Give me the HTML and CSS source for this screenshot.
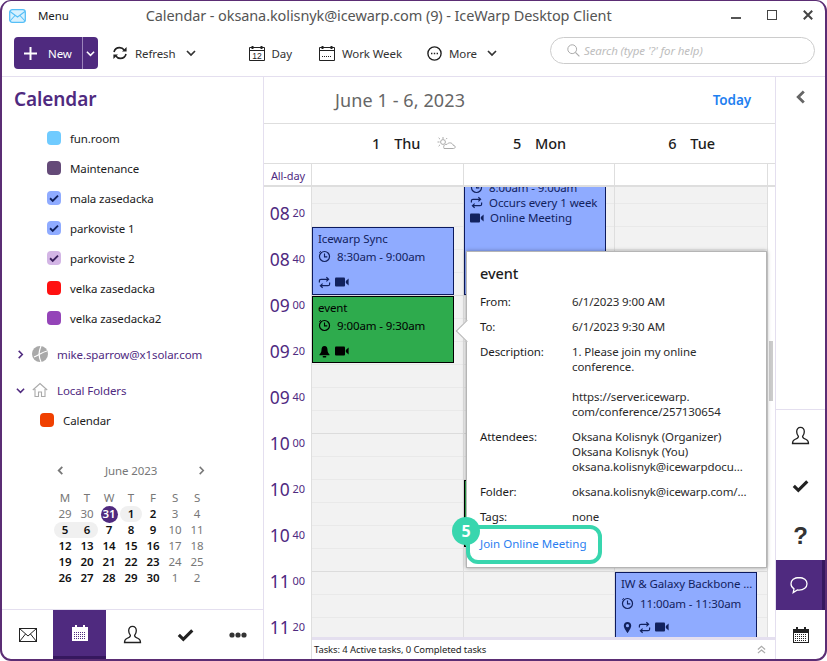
FILE: index.html
```html
<!DOCTYPE html>
<html lang="en">
<head>
    <meta charset="UTF-8">
    <meta name="viewport" content="width=device-width, initial-scale=1.0">
    <title>IceWarp Desktop Client</title>
    <link rel="stylesheet" href="styles.css">
</head>
<body>
    <svg class="icon-defs" width="0" height="0">
        <symbol id="i-clock" viewBox="0 0 14 14"><circle cx="7" cy="7" r="5.4" fill="none" stroke="currentColor" stroke-width="1.3"/><path d="M7 3.8V7.4H10" fill="none" stroke="currentColor" stroke-width="1.2"/><path d="M1.4 3 3 1.2" stroke="currentColor" stroke-width="1"/></symbol>
        <symbol id="i-repeat" viewBox="0 0 14 14"><path d="M1.5 7V5.2C1.5 4.2 2.2 3.6 3.2 3.6H11M9 1.4 11.4 3.6 9 5.8M12.5 7V8.8C12.5 9.8 11.8 10.4 10.8 10.4H3M5 8.2 2.6 10.4 5 12.6" fill="none" stroke="currentColor" stroke-width="1.3"/></symbol>
        <symbol id="i-video" viewBox="0 0 14 14"><rect x="0" y="2.5" width="10" height="9" rx="1" fill="currentColor"/><path d="M10.8 6 13.6 3.6V10.4L10.8 8Z" fill="currentColor"/></symbol>
        <symbol id="i-bell" viewBox="0 0 14 14"><path d="M7 1C4.8 1 3.8 2.8 3.8 4.8 3.8 7.6 2.8 9 1.6 10.2V11H12.4V10.2C11.2 9 10.2 7.6 10.2 4.8 10.2 2.8 9.2 1 7 1Z" fill="currentColor"/><rect x="5" y="11.8" width="4" height="1.6" rx=".8" fill="currentColor"/></symbol>
        <symbol id="i-pin" viewBox="0 0 14 14"><path d="M7 1C4.6 1 3 2.7 3 5 3 7.6 7 13 7 13S11 7.6 11 5C11 2.7 9.4 1 7 1Z" fill="currentColor"/><circle cx="7" cy="5" r="1.7" fill="#8fabff"/></symbol>
        <symbol id="i-check" viewBox="0 0 14 14"><path d="M1.5 7.4 5.2 11 12.6 3.6" fill="none" stroke="currentColor" stroke-width="2.6"/></symbol>
        <symbol id="i-chev-down" viewBox="0 0 10 10"><path d="M1 3 5 7 9 3" fill="none" stroke="currentColor" stroke-width="1.7"/></symbol>
        <symbol id="i-chev-right" viewBox="0 0 10 10"><path d="M3 1 7 5 3 9" fill="none" stroke="currentColor" stroke-width="1.7"/></symbol>
        <symbol id="i-chev-left" viewBox="0 0 10 10"><path d="M7 1 3 5 7 9" fill="none" stroke="currentColor" stroke-width="2"/></symbol>
        <symbol id="i-person" viewBox="0 0 20 20"><path d="M10 1.5C7.4 1.5 6 3.4 6 6 6 8.2 6.9 9.8 7.8 11 7.8 12.6 6.4 13.2 4 14.2 2.4 14.9 1.6 15.8 1.6 18.4H18.4C18.4 15.8 17.6 14.9 16 14.2 13.6 13.2 12.2 12.6 12.2 11 13.1 9.8 14 8.2 14 6 14 3.4 12.6 1.5 10 1.5Z" fill="none" stroke="currentColor" stroke-width="1.4"/></symbol>
        <symbol id="i-bigcal" viewBox="0 0 18 18"><path d="M1 3H4V1H6V3H12V1H14V3H17V17H1Z" fill="currentColor"/><rect x="2" y="7" width="14" height="9" fill="var(--cal-fill)"/><path d="M3 8.5H15M3 10.5H15M3 12.5H15M3 14.5H15" stroke="var(--cal-dots)" stroke-width="1" stroke-dasharray="1 1"/></symbol>
    </svg>

    <div class="window">
        <header class="titlebar">
            <svg class="app-icon" width="17" height="14" viewBox="0 0 17 14"><rect x=".7" y=".7" width="15.6" height="12.6" rx="2.5" fill="#d8f1fe" stroke="#56bff7" stroke-width="1.3"/><path d="M1 2.5 8.5 8 16 2.5M1 12 6 6.5M16 12 11 6.5" fill="none" stroke="#56bff7" stroke-width="1.1"/></svg>
            <span class="menu-label">Menu</span>
            <span class="window-title">Calendar - oksana.kolisnyk@icewarp.com (9) - IceWarp Desktop Client</span>
            <div class="window-controls">
                <svg width="10" height="10" viewBox="0 0 10 10"><rect y="7" width="10" height="2" fill="#555"/></svg>
                <svg width="10" height="10" viewBox="0 0 10 10"><rect x=".5" y=".5" width="9" height="9" fill="none" stroke="#444"/></svg>
                <svg width="10" height="10" viewBox="0 0 10 10"><path d="M.8.8 9.2 9.2M9.2.8.8 9.2" stroke="#444" stroke-width="2"/></svg>
            </div>
        </header>

        <div class="toolbar">
            <div class="new-btn">
                <span class="new-main">
                    <svg width="13" height="13" viewBox="0 0 13 13"><path d="M6.5 0V13M0 6.5H13" stroke="#fff" stroke-width="2"/></svg>
                    New
                </span>
                <span class="new-drop"><svg width="9" height="9"><use href="#i-chev-down"/></svg></span>
            </div>
            <a class="tool tool-refresh">
                <svg width="16" height="16" viewBox="0 0 16 16"><path d="M2 7C2.6 4.4 4.8 2.6 7.6 2.6 9.6 2.6 11.2 3.6 12.2 5M14 9C13.4 11.6 11.2 13.4 8.4 13.4 6.4 13.4 4.8 12.4 3.8 11" fill="none" stroke="#222" stroke-width="1.6"/><path d="M14.6 2V6.6H10ZM1.4 14V9.4H6Z" fill="#222"/></svg>
                Refresh
                <svg class="tool-chev" width="10" height="10"><use href="#i-chev-down"/></svg>
            </a>
            <a class="tool tool-day">
                <svg width="16" height="16" viewBox="0 0 16 16"><path d="M.5 2.5H15.5V15.5H.5ZM.5 5.5H15.5" fill="none" stroke="#222"/><path d="M3.5 1V4M12.5 1V4" stroke="#222" stroke-width="2"/><text x="8" y="14" font-size="8.5" text-anchor="middle" font-family="Liberation Sans" fill="#222">12</text></svg>
                Day
            </a>
            <a class="tool tool-week">
                <svg width="16" height="16" viewBox="0 0 16 16"><path d="M.5 2.5H15.5V15.5H.5ZM.5 5.5H15.5" fill="none" stroke="#222"/><path d="M3.5 1V4M12.5 1V4" stroke="#222" stroke-width="2"/><path d="M3 11.5H13" stroke="#222" stroke-dasharray="1 1"/></svg>
                Work Week
            </a>
            <a class="tool tool-more">
                <svg width="15" height="15" viewBox="0 0 15 15"><circle cx="7.5" cy="7.5" r="6.6" fill="none" stroke="#222" stroke-width="1.4"/><path d="M4 7.5H5.4M6.8 7.5H8.2M9.6 7.5H11" stroke="#222" stroke-width="1.6"/></svg>
                More
                <svg class="tool-chev" width="10" height="10"><use href="#i-chev-down"/></svg>
            </a>
            <div class="search-box">
                <svg width="13" height="13" viewBox="0 0 13 13"><circle cx="5.2" cy="5.2" r="4.4" fill="none" stroke="#aaa"/><path d="M8.4 8.4 12.4 12.4" stroke="#aaa" stroke-width="1.2"/></svg>
                <span>Search (type '?' for help)</span>
            </div>
        </div>

        <div class="app-body">
            <aside class="sidebar">
                <h1 class="sidebar-title">Calendar</h1>
                <ul class="folder-list">
                    <li><span class="swatch swatch-sky"></span>fun.room</li>
                    <li><span class="swatch swatch-plum"></span>Maintenance</li>
                    <li><span class="swatch swatch-blue"><svg width="10" height="10"><use href="#i-check"/></svg></span>mala zasedacka</li>
                    <li><span class="swatch swatch-blue"><svg width="10" height="10"><use href="#i-check"/></svg></span>parkoviste 1</li>
                    <li><span class="swatch swatch-lilac"><svg width="10" height="10"><use href="#i-check"/></svg></span>parkoviste 2</li>
                    <li><span class="swatch swatch-red"></span>velka zasedacka</li>
                    <li><span class="swatch swatch-violet"></span>velka zasedacka2</li>
                </ul>
                <div class="account account-mike">
                    <svg class="account-chev" width="9" height="9"><use href="#i-chev-right"/></svg>
                    <svg width="16" height="16" viewBox="0 0 16 16"><circle cx="8" cy="8" r="8" fill="#a9a9a9"/><path d="M9 0C7 5 6 9 9 16M2 11C6 10 10 6 15 5" fill="none" stroke="#fff" stroke-width="1.2"/></svg>
                    <span>mike.sparrow@x1solar.com</span>
                </div>
                <div class="account account-local">
                    <svg class="account-chev" width="9" height="9"><use href="#i-chev-down"/></svg>
                    <svg width="16" height="16" viewBox="0 0 16 16"><path d="M.8 8 8 1.5 15.2 8M3 7V14.5H6.5V10H9.5V14.5H13V7" fill="none" stroke="#aaa" stroke-width="1.1"/></svg>
                    <span>Local Folders</span>
                </div>
                <div class="local-item"><span class="swatch swatch-orange"></span>Calendar</div>

                <div class="minical">
                    <div class="minical-head">
                        <svg width="9" height="9"><use href="#i-chev-left"/></svg>
                        <span>June 2023</span>
                        <svg width="9" height="9"><use href="#i-chev-right"/></svg>
                    </div>
                    <div class="minical-grid">
                        <span class="dow">M</span><span class="dow">T</span><span class="dow">W</span><span class="dow">T</span><span class="dow">F</span><span class="dow">S</span><span class="dow">S</span>
                        <span>29</span><span>30</span><b class="today">31</b><b class="sel-one">1</b><b>2</b><span>3</span><span>4</span>
                        <b class="sel-start">5</b><b class="sel-end">6</b><b>7</b><b>8</b><b>9</b><span>10</span><span>11</span>
                        <b>12</b><b>13</b><b>14</b><b>15</b><b>16</b><span>17</span><span>18</span>
                        <b>19</b><b>20</b><b>21</b><b>22</b><b>23</b><span>24</span><span>25</span>
                        <b>26</b><b>27</b><b>28</b><b>29</b><b>30</b><span>1</span><span>2</span>
                    </div>
                </div>

                <nav class="module-nav">
                    <a><svg width="26" height="20" viewBox="0 0 26 20"><rect x="4.5" y="3.5" width="17" height="13" fill="none" stroke="#222"/><path d="M4.5 3.5 13 11 21.5 3.5M4.5 16.5 10.5 9M21.5 16.5 15.5 9" fill="none" stroke="#222"/></svg></a>
                    <a class="active"><svg width="18" height="18"><use href="#i-bigcal"/></svg></a>
                    <a><svg width="19" height="19"><use href="#i-person"/></svg></a>
                    <a><svg width="17" height="17"><use href="#i-check"/></svg></a>
                    <a><svg width="18" height="6" viewBox="0 0 18 6"><circle cx="3" cy="3" r="2.6" fill="#333"/><circle cx="9" cy="3" r="2.6" fill="#333"/><circle cx="15" cy="3" r="2.6" fill="#333"/></svg></a>
                </nav>
            </aside>

            <main class="calendar">
                <div class="range-bar">
                    <span class="range-label">June 1 - 6, 2023</span>
                    <a class="today-link">Today</a>
                </div>
                <div class="day-head">
                    <div class="day-cell day-thu">
                        <span class="day-num">1</span><span>Thu</span>
                        <svg class="weather" width="19" height="15" viewBox="0 0 19 15"><path d="M7 12.5H16.5C19 12.5 18.5 9 16 9.2 15.5 6.5 11.5 6 10 8.4 7.5 8 6 10 7 12.5Z" fill="none" stroke="#aaa"/><path d="M6 3V1M2.5 6H.5M3 3.2 1.6 1.8M9 3.2 10.2 2M3 8.8 1.6 10.2" stroke="#aaa"/><circle cx="6" cy="6" r="2.4" fill="none" stroke="#aaa"/></svg>
                    </div>
                    <div class="day-cell day-mon"><span class="day-num">5</span><span>Mon</span></div>
                    <div class="day-cell day-tue"><span class="day-num">6</span><span>Tue</span></div>
                </div>

                <div class="cal-body">
                    <div class="time-col">
                        <div class="allday-label">All-day</div>
                        <div class="time-labels">
                            <div class="time-row">08<small>20</small></div>
                            <div class="time-row">08<small>40</small></div>
                            <div class="time-row">09<small>00</small></div>
                            <div class="time-row">09<small>20</small></div>
                            <div class="time-row">09<small>40</small></div>
                            <div class="time-row">10<small>00</small></div>
                            <div class="time-row">10<small>20</small></div>
                            <div class="time-row">10<small>40</small></div>
                            <div class="time-row">11<small>00</small></div>
                            <div class="time-row">11<small>20</small></div>
                        </div>
                    </div>

                    <div class="cal-main">
                        <div class="allday-row">
                            <div class="col-thu"></div>
                            <div class="col-mon"></div>
                            <div class="col-tue"></div>
                        </div>
                        <div class="grid">
                            <div class="day-col col-thu">
                                <div class="event event-blue event-sync">
                                    <div class="ev-title">Icewarp Sync</div>
                                    <div class="ev-line"><svg width="13" height="13"><use href="#i-clock"/></svg>8:30am - 9:00am</div>
                                    <div class="ev-icons"><svg width="13" height="13"><use href="#i-repeat"/></svg><svg width="14" height="14"><use href="#i-video"/></svg></div>
                                </div>
                                <div class="event event-green event-nine">
                                    <div class="ev-title">event</div>
                                    <div class="ev-line"><svg width="13" height="13"><use href="#i-clock"/></svg>9:00am - 9:30am</div>
                                    <div class="ev-icons"><svg width="13" height="13"><use href="#i-bell"/></svg><svg width="14" height="14"><use href="#i-video"/></svg></div>
                                </div>
                            </div>
                            <div class="day-col col-mon">
                                <div class="event event-blue event-weekly">
                                    <div class="ev-row"><svg width="13" height="13"><use href="#i-clock"/></svg>8:00am - 9:00am</div>
                                    <div class="ev-row"><svg width="13" height="13"><use href="#i-repeat"/></svg>Occurs every 1 week</div>
                                    <div class="ev-row"><svg width="14" height="14"><use href="#i-video"/></svg>Online Meeting</div>
                                </div>
                                <div class="event event-hidden"></div>
                            </div>
                            <div class="day-col col-tue">
                                <div class="event event-blue event-backbone">
                                    <div class="ev-title">IW &amp; Galaxy Backbone ...</div>
                                    <div class="ev-line"><svg width="13" height="13"><use href="#i-clock"/></svg>11:00am - 11:30am</div>
                                    <div class="ev-icons"><svg width="13" height="13"><use href="#i-pin"/></svg><svg width="13" height="13"><use href="#i-repeat"/></svg><svg width="14" height="14"><use href="#i-video"/></svg></div>
                                </div>
                            </div>
                            <div class="scroll-track"><div class="scroll-thumb"></div></div>

                            <div class="popup">
                                <h3 class="popup-title">event</h3>
                                <dl class="popup-fields">
                                    <dt>From:</dt><dd>6/1/2023 9:00 AM</dd>
                                    <dt>To:</dt><dd>6/1/2023 9:30 AM</dd>
                                    <dt>Description:</dt><dd>1. Please join my online<br>conference.<br><br>https://server.icewarp.<br>com/conference/257130654</dd>
                                    <dt>Attendees:</dt><dd>Oksana Kolisnyk (Organizer)<br>Oksana Kolisnyk (You)<br>oksana.kolisnyk@icewarpdocu...</dd>
                                    <dt>Folder:</dt><dd>oksana.kolisnyk@icewarp.com/...</dd>
                                    <dt>Tags:</dt><dd>none</dd>
                                </dl>
                                <a class="popup-join">Join Online Meeting</a>
                                <div class="callout-ring"></div>
                                <div class="callout-badge">5</div>
                            </div>
                        </div>
                        <div class="status-bar">
                            <span>Tasks: 4 Active tasks, 0 Completed tasks</span>
                            <svg width="9" height="9" viewBox="0 0 10 10"><path d="M1 5 5 1.5 9 5M1 9 5 5.5 9 9" fill="none" stroke="#aaa" stroke-width="1.3"/></svg>
                        </div>
                    </div>
                </div>
            </main>

            <aside class="rail">
                <div class="rail-top"><svg width="14" height="14"><use href="#i-chev-left"/></svg></div>
                <a><svg width="19" height="19"><use href="#i-person"/></svg></a>
                <a><svg width="17" height="17"><use href="#i-check"/></svg></a>
                <a class="rail-help">?</a>
                <a class="active"><svg width="20" height="20" viewBox="0 0 20 20"><path d="M10 2.5C5.2 2.5 2 5.2 2 8.8 2 11 3.2 12.8 5 13.9L4.2 17.6 8.4 15C8.9 15.1 9.5 15.1 10 15.1 14.8 15.1 18 12.4 18 8.8 18 5.2 14.8 2.5 10 2.5Z" fill="none" stroke="#fff" stroke-width="1.3"/></svg></a>
                <a><svg width="18" height="18"><use href="#i-bigcal"/></svg></a>
            </aside>
        </div>
    </div>
</body>
</html>
```

FILE: styles.css
```css
:root {
    --purple: #4f2a7f;
    --purple-dark: #36185e;
    --frame: #5b2d74;
    --line: #dedede;
    --soft-line: #e4dfef;
    --text: #1c1c1c;
    --event-blue: #8fabff;
    --event-navy: #0c1a5e;
    --event-green: #2eab4d;
    --teal: #38d6ae;
    --cal-fill: #fff;
    --cal-dots: #222;
}

* {
    margin: 0;
    padding: 0;
    box-sizing: border-box;
}

body {
    font-family: 'Noto Sans', 'Open Sans', sans-serif;
    font-size: 11.5px;
    letter-spacing: -0.1px;
    line-height: 15px;
    color: var(--text);
    background-color: #fff;
    width: 827px;
    height: 661px;
    overflow: hidden;
}

.icon-defs {
    position: absolute;
}

svg {
    display: block;
    flex-shrink: 0;
}

.window {
    width: 827px;
    height: 661px;
    border: 2px solid var(--frame);
    border-top-width: 1px;
    border-radius: 11px;
    display: flex;
    flex-direction: column;
    overflow: hidden;
    background-color: #fff;
}

/* title bar */
.titlebar {
    height: 31px;
    display: flex;
    align-items: center;
    padding: 0 0 2px 7px;
    flex-shrink: 0;
}

.menu-label {
    margin-left: 12px;
}

.window-title {
    margin-left: 77px;
    font-size: 14.5px;
    color: #555;
    white-space: nowrap;
}

.window-controls {
    margin-left: auto;
    display: flex;
    gap: 26px;
    padding-right: 12px;
    margin-bottom: 2px;
}

/* toolbar */
.toolbar {
    height: 45px;
    display: flex;
    align-items: center;
    padding: 0 0 2px 12px;
    border-bottom: 1px solid var(--soft-line);
    flex-shrink: 0;
}

.new-btn {
    width: 84px;
    height: 32px;
    background-color: var(--purple);
    border-radius: 4px;
    color: #fff;
    display: flex;
}

.new-main {
    width: 69px;
    display: flex;
    align-items: center;
    gap: 11px;
    padding-left: 10px;
    border-right: 1px solid #9c84bb;
}

.new-drop {
    flex-grow: 1;
    display: flex;
    align-items: center;
    justify-content: center;
}

.tool {
    display: flex;
    align-items: center;
    gap: 7px;
    white-space: nowrap;
    color: #333;
}

.tool-chev {
    margin-left: 3px;
}

.tool-refresh { margin-left: 14px; }
.tool-day { margin-left: 53px; }
.tool-week { margin-left: 27px; }
.tool-more { margin-left: 25px; }

.search-box {
    margin-left: auto;
    margin-right: 10px;
    width: 265px;
    height: 27px;
    margin-top: -6px;
    border: 1px solid #ccc;
    border-radius: 14px;
    display: flex;
    align-items: center;
    gap: 4px;
    padding-left: 16px;
    color: #bdbdbd;
    font-style: italic;
}

.app-body {
    flex-grow: 1;
    display: flex;
    min-height: 0;
}

/* left sidebar */
.sidebar {
    width: 262px;
    border-right: 1px solid var(--soft-line);
    display: flex;
    flex-direction: column;
    flex-shrink: 0;
}

.sidebar-title {
    font-size: 19px;
    line-height: 26px;
    font-weight: 600;
    color: var(--purple);
    padding: 9px 0 0 12px;
    height: 46px;
}

.folder-list {
    list-style: none;
    padding-left: 45px;
}

.folder-list li {
    height: 30px;
    display: flex;
    align-items: center;
    gap: 9px;
}

.swatch {
    width: 14px;
    height: 14px;
    border-radius: 4px;
    display: flex;
    align-items: center;
    justify-content: center;
    color: #10205c;
}

.swatch-sky { background-color: #6fcbff; }
.swatch-plum { background-color: #644a78; }
.swatch-blue { background-color: var(--event-blue); }
.swatch-lilac { background-color: #d3b5e5; color: #3a1f5c; }
.swatch-red { background-color: #ff1010; }
.swatch-violet { background-color: #9444b8; }
.swatch-orange { background-color: #f04000; }

.account {
    display: flex;
    align-items: center;
    color: var(--purple);
    height: 36px;
    padding-left: 14px;
}

.account-mike { margin-top: 3px; }

.account-chev {
    margin-right: 7px;
}

.account svg + svg {
    margin-right: 9px;
}

.local-item {
    height: 24px;
    display: flex;
    align-items: center;
    gap: 9px;
    padding-left: 38px;
}

.minical {
    margin-top: 29px;
    padding-left: 52px;
}

.minical-head {
    width: 154px;
    display: flex;
    align-items: center;
    justify-content: space-between;
    padding: 0 0 0 2px;
    color: #777;
    height: 18px;
}

.minical-head svg:last-child {
    margin-right: 2px;
}

.minical-grid {
    margin-top: 11px;
    display: grid;
    grid-template-columns: repeat(7, 22px);
    grid-auto-rows: 16px;
    text-align: center;
    font-size: 11.5px;
    line-height: 16px;
    color: #777;
}

.minical-grid b {
    color: #111;
    font-weight: 600;
}

.minical-grid .today {
    background-color: var(--purple);
    color: #fff;
    width: 17px;
    height: 17px;
    border-radius: 50%;
    margin-left: 2.5px;
}

.sel-one { background-color: #f0f0f0; border-radius: 9px; }
.sel-start { background-color: #f0f0f0; border-radius: 9px 0 0 9px; }
.sel-end { background-color: #f0f0f0; border-radius: 0 9px 9px 0; }

.module-nav {
    margin-top: auto;
    height: 50px;
    border-top: 1px solid var(--soft-line);
    display: flex;
    color: #222;
}

.module-nav a {
    width: 53px;
    display: flex;
    align-items: center;
    justify-content: center;
}

.module-nav a:first-child {
    width: 51px;
}

.module-nav a:last-child {
    width: 51px;
}

.module-nav a.active {
    background-color: var(--purple);
    color: #fff;
    border-bottom: 3px solid var(--purple-dark);
    --cal-dots: var(--purple);
}

/* calendar */
.calendar {
    width: 512px;
    border-right: 1px solid var(--soft-line);
    display: flex;
    flex-direction: column;
    flex-shrink: 0;
}

.range-bar {
    height: 47px;
    border-bottom: 1px solid var(--line);
    display: flex;
    align-items: center;
    justify-content: space-between;
    padding: 0 24px 0 71px;
    flex-shrink: 0;
}

.range-label {
    font-size: 18px;
    letter-spacing: 0.1px;
    color: #666;
}

.today-link {
    font-size: 13.5px;
    font-weight: 600;
    color: #1f80f0;
}

.day-head {
    height: 40px;
    border-bottom: 1px solid var(--line);
    display: flex;
    padding-left: 48px;
    font-size: 14.5px;
    font-weight: 500;
    flex-shrink: 0;
}

.day-cell {
    display: flex;
    align-items: center;
    gap: 14px;
}

.day-thu { width: 152px; padding-left: 60px; }
.day-mon { width: 151px; justify-content: center; }
.day-tue { width: 153px; justify-content: center; }

.weather {
    margin-left: 3px;
}

.cal-body {
    flex-grow: 1;
    display: flex;
    min-height: 0;
}

.time-col {
    width: 48px;
    border-right: 1px solid var(--line);
    flex-shrink: 0;
    overflow: hidden;
}

.allday-label {
    height: 23px;
    border-bottom: 2px solid var(--line);
    font-size: 11px;
    line-height: 23px;
    color: var(--purple);
    text-align: right;
    padding-right: 6px;
}

.time-labels {
    padding-top: 3px;
}

.time-row {
    height: 46px;
    line-height: 46px;
    font-size: 17.5px;
    color: var(--purple);
    text-align: right;
    padding-right: 6px;
}

.time-row small {
    font-size: 11px;
    margin-left: 3px;
    vertical-align: 3px;
}

.cal-main {
    flex-grow: 1;
    display: flex;
    flex-direction: column;
    min-width: 0;
}

.allday-row {
    height: 23px;
    border-bottom: 2px solid var(--line);
    display: flex;
    flex-shrink: 0;
}

.col-thu { width: 152px; border-right: 1px solid var(--line); }
.col-mon { width: 151px; border-right: 1px solid var(--line); }
.col-tue { width: 153px; border-right: 1px solid var(--line); }

.grid {
    flex-grow: 1;
    display: flex;
    position: relative;
    overflow: hidden;
}

.day-col {
    position: relative;
    background-color: #f2f2f2;
    background-image:
        linear-gradient(to bottom, #dcdcdc 1px, transparent 1px),
        linear-gradient(to bottom, #e9e9e9 1px, transparent 1px);
    background-size: 100% 138px, 100% 23px;
    background-position: 0 108px, 0 16px;
}

.scroll-track {
    flex-grow: 1;
    padding: 154px 2px 0 1px;
}

.scroll-thumb {
    height: 60px;
    background-color: #ccc;
}

/* events sit on the time grid, so they are placed by time */
.event {
    position: absolute;
    left: 0;
    width: 142px;
    border: 1px solid;
    padding: 3px 5px;
    white-space: nowrap;
}

.event-blue {
    background-color: var(--event-blue);
    border-color: var(--event-navy);
    color: #12225e;
}

.event-green {
    background-color: var(--event-green);
    border-color: #000;
    color: #000;
}

.event-sync { top: 40px; height: 68px; }
.event-nine { top: 109px; height: 67px; }
.event-weekly { top: -30px; height: 138px; padding-top: 22px; }
.event-hidden { top: 293px; height: 67px; background-color: var(--event-green); border-color: #000; }
.event-backbone { top: 385px; height: 80px; }

.ev-title {
    height: 15px;
}

.ev-line {
    display: flex;
    align-items: center;
    gap: 6px;
    margin-top: 3px;
}

.ev-icons {
    display: flex;
    align-items: center;
    gap: 4px;
    margin-top: 11px;
}

.event-backbone .ev-line { margin-top: 5px; }
.event-backbone .ev-icons { margin-top: 9px; }

.ev-row {
    display: flex;
    align-items: center;
    gap: 6px;
}

/* popup */
.popup {
    position: absolute;
    left: 154px;
    top: 64px;
    width: 301px;
    height: 317px;
    background-color: #fff;
    border: 1px solid #b5b5b5;
    box-shadow: 0 0 4px rgba(0, 0, 0, 0.35);
    padding: 12px 13px;
}

.popup::before {
    content: '';
    position: absolute;
    left: -8px;
    top: 71px;
    width: 15px;
    height: 15px;
    background-color: #fff;
    border-left: 1px solid #b5b5b5;
    border-bottom: 1px solid #b5b5b5;
    transform: rotate(45deg);
}

.popup-title {
    font-size: 14.5px;
    line-height: 18px;
    font-weight: 500;
    margin-bottom: 12px;
}

.popup-fields {
    display: grid;
    grid-template-columns: 92px 1fr;
    row-gap: 10px;
    white-space: nowrap;
}

.popup-fields dd {
    color: #2b2b2b;
}

.popup-join {
    display: block;
    margin-top: 12px;
    letter-spacing: 0;
    color: #2a7ef0;
}

.callout-ring {
    position: absolute;
    left: -1px;
    top: 273px;
    width: 136px;
    height: 39px;
    border: 4px solid var(--teal);
    border-radius: 12px;
}

.callout-badge {
    position: absolute;
    left: -15px;
    top: 265px;
    width: 28px;
    height: 28px;
    border-radius: 50%;
    background-color: var(--teal);
    color: #fff;
    font-size: 16px;
    font-weight: 700;
    line-height: 28px;
    text-align: center;
}

.status-bar {
    height: 22px;
    border-top: 3px solid var(--soft-line);
    display: flex;
    align-items: center;
    justify-content: space-between;
    padding: 0 9px 0 2px;
    font-size: 9.5px;
    background-color: #fff;
    position: relative;
    flex-shrink: 0;
}

/* right rail */
.rail {
    flex-grow: 1;
    display: flex;
    flex-direction: column;
    color: #222;
}

.rail-top {
    height: 333px;
    border-bottom: 1px solid var(--soft-line);
    padding: 13px 0 0 18px;
    color: #666;
    flex-shrink: 0;
}

.rail a {
    height: 50px;
    display: flex;
    align-items: center;
    justify-content: center;
    flex-shrink: 0;
}

.rail a.active {
    background-color: var(--purple);
    border-right: 3px solid var(--purple-dark);
}

.rail-help {
    font-family: 'Liberation Sans', sans-serif;
    font-size: 24px;
    font-weight: 700;
    color: #333;
}
```
